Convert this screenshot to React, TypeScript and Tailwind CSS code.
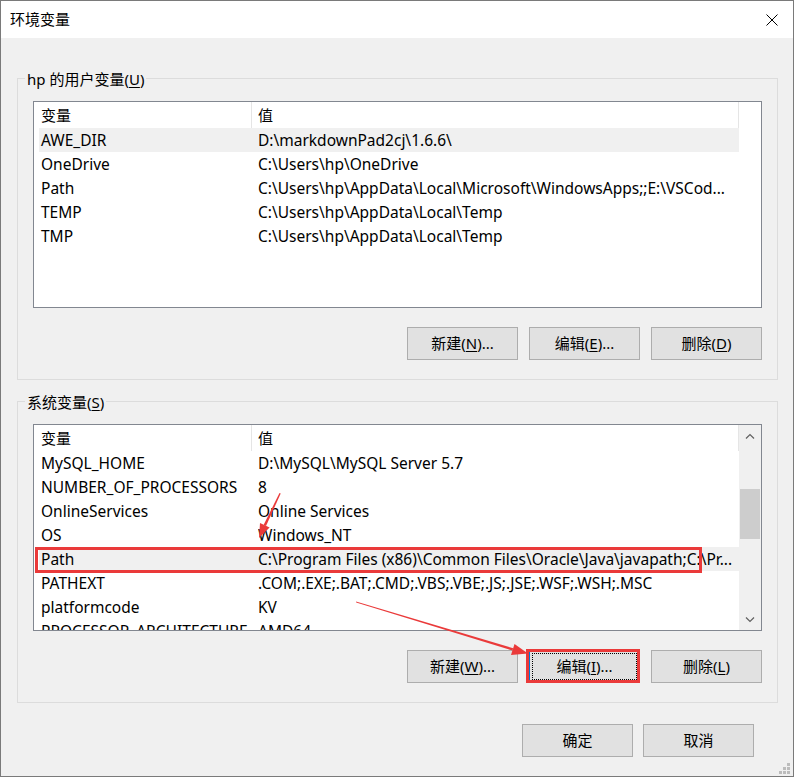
import React from 'react';

const font = { fontFamily: '"Noto Sans", "Noto Sans CJK SC", sans-serif' };

type Row = [string, string];

const userVars: Row[] = [
  ['AWE_DIR', 'D:\\markdownPad2cj\\1.6.6\\'],
  ['OneDrive', 'C:\\Users\\hp\\OneDrive'],
  ['Path', 'C:\\Users\\hp\\AppData\\Local\\Microsoft\\WindowsApps;;E:\\VSCod...'],
  ['TEMP', 'C:\\Users\\hp\\AppData\\Local\\Temp'],
  ['TMP', 'C:\\Users\\hp\\AppData\\Local\\Temp'],
];

const sysVars: Row[] = [
  ['MySQL_HOME', 'D:\\MySQL\\MySQL Server 5.7'],
  ['NUMBER_OF_PROCESSORS', '8'],
  ['OnlineServices', 'Online Services'],
  ['OS', 'Windows_NT'],
  ['Path', 'C:\\Program Files (x86)\\Common Files\\Oracle\\Java\\javapath;C:\\Pr...'],
  ['PATHEXT', '.COM;.EXE;.BAT;.CMD;.VBS;.VBE;.JS;.JSE;.WSF;.WSH;.MSC'],
  ['platformcode', 'KV'],
  ['PROCESSOR_ARCHITECTURE', 'AMD64'],
];

const Btn = ({ label, keyChar, tail, focused }: { label: string; keyChar?: string; tail?: string; focused?: boolean }) => (
  <button
    className={
      'w-[111px] h-[33px] bg-[#e1e1e1] border text-[15px] text-black flex items-center justify-center ' +
      (focused ? 'border-[#0078d7] outline-1 outline-dotted outline-black outline-offset-[-4px]' : 'border-[#adadad]')
    }
  >
    {label}
    {keyChar && (
      <>
        (<span className="underline underline-offset-2">{keyChar}</span>)
      </>
    )}
    {tail}
  </button>
);

const Header = () => (
  <div className="h-[26px] flex shrink-0">
    <div className="w-[218px] pl-[7px] border-r border-[#e5e5e5] flex items-center">变量</div>
    <div className="flex-1 pl-[6px] border-r border-[#e5e5e5] flex items-center">值</div>
  </div>
);

const VarList = ({ rows, selected, scroll }: { rows: Row[]; selected: number; scroll?: boolean }) => (
  <div className="mt-[12px] h-[207px] border border-[#828790] bg-white flex overflow-hidden relative shrink-0">
    <div className="w-[705px] flex flex-col">
      <Header />
      {rows.map(([k, v], i) => (
        <div
          key={k + i}
          className={
            'ml-[5px] w-[700px] h-[24px] pt-[2px] flex items-center shrink-0 text-[15.5px] ' +
            (i === selected ? 'bg-[#f0f0f0]' : '')
          }
        >
          <span className="w-[219px] pl-[2px] whitespace-nowrap">{k}</span>
          <span className="flex-1 whitespace-nowrap overflow-hidden">{v}</span>
        </div>
      ))}
    </div>
    {scroll && (
      <div className="w-[22px] ml-auto bg-[#f0f0f0] flex flex-col">
        <div className="h-[21px] flex items-center justify-center">
          <svg width="10" height="6" viewBox="0 0 10 6">
            <polyline points="1,5.5 5,1.5 9,5.5" fill="none" stroke="#606060" strokeWidth="1.2" />
          </svg>
        </div>
        <div className="h-[43px]" />
        <div className="h-[50px] mx-[1px] bg-[#cdcdcd]" />
        <div className="flex-1" />
        <div className="h-[21px] flex items-center justify-center">
          <svg width="10" height="6" viewBox="0 0 10 6">
            <polyline points="1,0.5 5,4.5 9,0.5" fill="none" stroke="#606060" strokeWidth="1.2" />
          </svg>
        </div>
      </div>
    )}
    {scroll && <div className="absolute left-[1px] top-[122px] w-[667px] h-[26px] border-[3px] border-[#ea3a3a]" />}
  </div>
);

const Group = ({ title, keyChar, children }: { title: string; keyChar: string; children: React.ReactNode }) => (
  <div className="h-[302px] border border-[#dcdcdc] flex flex-col px-[15px] shrink-0">
    <div className="self-start -ml-[8px] -mt-[10px] px-[2px] bg-[#f0f0f0] h-[20px] leading-[20px] text-[15px]">
      {title}(<span className="underline underline-offset-2">{keyChar}</span>)
    </div>
    {children}
  </div>
);

export default function App() {
  return (
    <div className="w-[794px] h-[777px] border border-[#7a7a7a] bg-[#f0f0f0] flex flex-col relative text-[15px] text-black" style={font}>
      <div className="h-[37px] bg-white flex items-center justify-between pl-[9px] pr-[15px] shrink-0">
        <span>环境变量</span>
        <svg width="12" height="12" viewBox="0 0 12 12">
          <path d="M0.5 0.5 L11.5 11.5 M11.5 0.5 L0.5 11.5" stroke="#000" strokeWidth="1" />
        </svg>
      </div>

      <div className="flex flex-col pl-[16px] pr-[15px]">
        <div className="mt-[40px]">
          <Group title="hp 的用户变量" keyChar="U">
            <VarList rows={userVars} selected={0} />
            <div className="mt-[19px] flex justify-end gap-[11px]">
              <Btn label="新建" keyChar="N" tail="..." />
              <Btn label="编辑" keyChar="E" tail="..." />
              <Btn label="删除" keyChar="D" />
            </div>
          </Group>
        </div>

        <div className="mt-[21px]">
          <Group title="系统变量" keyChar="S">
            <VarList rows={sysVars} selected={4} scroll />
            <div className="mt-[19px] flex justify-end gap-[11px]">
              <Btn label="新建" keyChar="W" tail="..." />
              <div className="relative">
                <Btn label="编辑" keyChar="I" tail="..." focused />
                <div className="absolute -left-[3px] -top-[1px] right-0 bottom-0 border-[3px] border-[#ea3a3a]" />
              </div>
              <Btn label="删除" keyChar="L" />
            </div>
          </Group>
        </div>

        <div className="mt-[21px] mr-[24px] flex justify-end gap-[10px]">
          <Btn label="确定" />
          <Btn label="取消" />
        </div>
      </div>

      <svg className="absolute left-0 top-0 pointer-events-none" width="794" height="777" viewBox="0 0 794 777">
        <polygon points="278.5,492 279.7,492.6 265,525 262.6,524" fill="#ea3a3a" />
        <polygon points="258,537 268.6,526.5 259,522" fill="#ea3a3a" />
        <polygon points="355,600.6 355.2,601.6 511.5,649.6 512.2,647.2" fill="#ea3a3a" />
        <polygon points="527,652.5 510,654 513.5,643" fill="#ea3a3a" />
        <g fill="#bcbcbc">
          <rect x="786" y="762" width="3" height="3" />
          <rect x="782" y="766" width="3" height="3" />
          <rect x="786" y="766" width="3" height="3" />
          <rect x="778" y="770" width="3" height="3" />
          <rect x="782" y="770" width="3" height="3" />
          <rect x="786" y="770" width="3" height="3" />
        </g>
      </svg>
    </div>
  );
}
